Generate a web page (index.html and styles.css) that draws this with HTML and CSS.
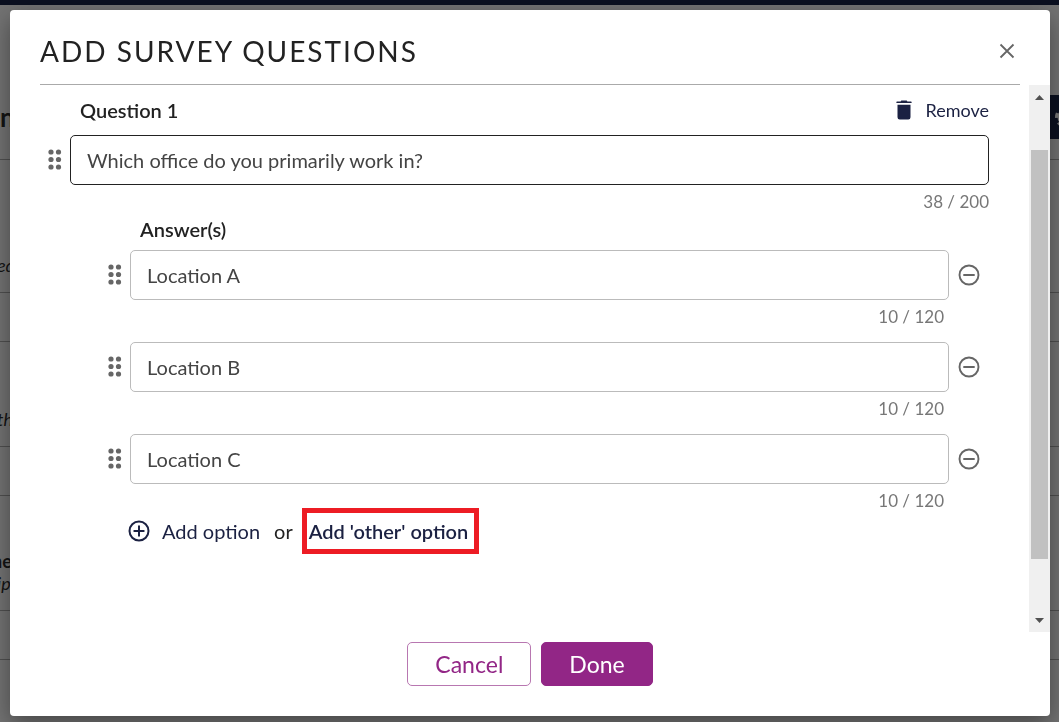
FILE: index.html
```
<!DOCTYPE html>
<html lang="en">

<head>
    <meta charset="UTF-8">
    <meta name="viewport" content="width=device-width, initial-scale=1.0">
    <title>Add Survey Questions</title>
    <link rel="stylesheet" href="styles.css">
</head>

<body>
    <!-- Shared icons -->
    <svg class="sprite" aria-hidden="true">
        <symbol id="drag" viewBox="0 0 14 22">
            <circle cx="3" cy="3" r="2.6" /><circle cx="10.5" cy="3" r="2.6" />
            <circle cx="3" cy="10.5" r="2.6" /><circle cx="10.5" cy="10.5" r="2.6" />
            <circle cx="3" cy="18" r="2.6" /><circle cx="10.5" cy="18" r="2.6" />
        </symbol>
        <symbol id="minus" viewBox="0 0 22 22">
            <circle cx="11" cy="11" r="9.5" fill="none" stroke="currentColor" stroke-width="1.9" />
            <path d="M6 11h10" stroke="currentColor" stroke-width="1.9" stroke-linecap="round" />
        </symbol>
    </svg>

    <!-- Page behind the dialog -->
    <main class="page">
        <div class="topbar"></div>
        <div class="page-row heading"><b>n</b><span class="settings">
            <svg width="22" height="22" viewBox="0 0 22 22"><circle cx="11" cy="11" r="6" fill="none" stroke="currentColor" stroke-width="5" /><circle cx="11" cy="11" r="9" fill="none" stroke="currentColor" stroke-width="4" stroke-dasharray="4.7 4.7" stroke-dashoffset="1" /></svg>
        </span></div>
        <div class="page-row tall"><i>ed</i></div>
        <div class="page-row short"></div>
        <div class="page-row medium"><i>th</i></div>
        <div class="page-row short"></div>
        <div class="page-row group"><b>ne</b><i>ip</i></div>
        <div class="page-row short"></div>
    </main>

    <div class="overlay">
        <section class="modal" role="dialog" aria-labelledby="modal-title">
            <header class="modal-header">
                <h1 id="modal-title">ADD SURVEY QUESTIONS</h1>
                <button class="close" aria-label="Close">
                    <svg width="16" height="16" viewBox="0 0 16 16"><path d="M1.5 1.5l13 13M14.5 1.5l-13 13" stroke="currentColor" stroke-width="1.8" /></svg>
                </button>
            </header>

            <div class="modal-body">
                <form class="question">
                    <div class="question-head">
                        <label for="question">Question 1</label>
                        <button type="button" class="remove">
                            <svg width="16" height="20" viewBox="0 0 16 20"><path d="M1 1.4h3.6L5.3.6h5.4l.7.8H15a.6.6 0 0 1 .6.6v1H.4V2a.6.6 0 0 1 .6-.6zM1.5 4.7h13v12.5a2.2 2.2 0 0 1-2.2 2.2H3.7a2.2 2.2 0 0 1-2.2-2.2z" fill="currentColor" /></svg>
                            Remove
                        </button>
                    </div>
                    <div class="field">
                        <button type="button" class="handle" aria-label="Move question"><svg><use href="#drag" /></svg></button>
                        <input class="active" id="question" type="text" maxlength="200" value="Which office do you primarily work in?">
                    </div>
                    <p class="count">38 / 200</p>

                    <fieldset class="answers">
                        <legend>Answer(s)</legend>
                        <div class="answer">
                            <div class="field">
                                <button type="button" class="handle" aria-label="Move answer"><svg><use href="#drag" /></svg></button>
                                <input type="text" maxlength="120" aria-label="Answer 1" value="Location A">
                                <button type="button" class="delete" aria-label="Delete answer"><svg><use href="#minus" /></svg></button>
                            </div>
                            <p class="count">10 / 120</p>
                        </div>
                        <div class="answer">
                            <div class="field">
                                <button type="button" class="handle" aria-label="Move answer"><svg><use href="#drag" /></svg></button>
                                <input type="text" maxlength="120" aria-label="Answer 2" value="Location B">
                                <button type="button" class="delete" aria-label="Delete answer"><svg><use href="#minus" /></svg></button>
                            </div>
                            <p class="count">10 / 120</p>
                        </div>
                        <div class="answer">
                            <div class="field">
                                <button type="button" class="handle" aria-label="Move answer"><svg><use href="#drag" /></svg></button>
                                <input type="text" maxlength="120" aria-label="Answer 3" value="Location C">
                                <button type="button" class="delete" aria-label="Delete answer"><svg><use href="#minus" /></svg></button>
                            </div>
                            <p class="count">10 / 120</p>
                        </div>
                    </fieldset>

                    <div class="add-row">
                        <button type="button" class="add">
                            <svg width="22" height="22" viewBox="0 0 22 22" fill="none" stroke="currentColor" stroke-width="2" stroke-linecap="round"><circle cx="11" cy="11" r="9.5" /><path d="M6.3 11h9.4M11 6.3v9.4" /></svg>
                            Add option
                        </button>
                        <span>or</span>
                        <button type="button" class="add-other">Add 'other' option</button>
                    </div>
                </form>

                <div class="scrollbar" aria-hidden="true">
                    <svg width="9" height="5" viewBox="0 0 9 5"><path d="M0 5L4.5 0 9 5z" /></svg>
                    <div class="track"><div class="thumb"></div></div>
                    <svg width="9" height="5" viewBox="0 0 9 5"><path d="M0 0L4.5 5 9 0z" /></svg>
                </div>
            </div>

            <footer class="modal-footer">
                <button class="btn">Cancel</button>
                <button class="btn primary">Done</button>
            </footer>
        </section>
    </div>
</body>

</html>
```
FILE: styles.css
```
/* General Styles */
* {
    box-sizing: border-box;
}

body {
    margin: 0;
    height: 100vh;
    overflow: hidden;
    font-family: Lato, sans-serif;
    font-size: 20px;
    color: #222222;
    background-color: #737373;
}

button {
    padding: 0;
    border: none;
    background: none;
    font: inherit;
    cursor: pointer;
}

svg {
    display: block;
    flex: none;
}

.sprite {
    position: absolute;
    width: 0;
    height: 0;
}

/* Page behind the dialog */
.page {
    color: #141414;
    font-size: 18px;
    line-height: 22px;
}

.topbar {
    height: 5px;
    background-color: #0b1020;
}

.page-row {
    display: flex;
    flex-direction: column;
    justify-content: flex-end;
    border-bottom: 1px solid #505050;
}

.page-row.heading {
    flex-direction: row;
    justify-content: space-between;
    align-items: flex-end;
    height: 155px;
    padding-bottom: 20px;
    font-size: 26px;
    line-height: 44px;
}

.settings {
    display: flex;
    align-items: center;
    width: 68px;
    height: 44px;
    padding-left: 36px;
    margin-right: -28px;
    color: #777777;
    background-color: #0b1020;
}

.page-row i {
    text-indent: -3px;
}

.page-row.tall {
    height: 133px;
    padding-bottom: 16px;
}

.page-row.short {
    height: 49px;
}

.page-row.medium {
    height: 105px;
    padding-bottom: 16px;
}

.page-row.group {
    height: 115px;
    padding-bottom: 16px;
}

.page-row.group b {
    text-indent: -8px;
}

/* Modal */
.overlay {
    position: fixed;
    inset: 0;
    display: flex;
    padding: 10px 9px 6px 10px;
}

.modal {
    flex: 1;
    display: flex;
    flex-direction: column;
    background-color: #ffffff;
    border-radius: 4px;
    box-shadow: 0 8px 24px rgba(0, 0, 0, 0.4);
}

.modal-header {
    display: flex;
    justify-content: space-between;
    align-items: center;
    height: 75px;
    margin: 0 30px;
    padding-top: 8px;
    border-bottom: 1px solid #aaaaaa;
}

.modal-header h1 {
    margin: 0;
    font-size: 28px;
    font-weight: 400;
    letter-spacing: 2px;
}

.close {
    padding: 5px;
    color: #666666;
}

.modal-body {
    flex: 1;
    display: flex;
    min-height: 0;
}

/* Question form */
.question {
    flex: 1;
    padding: 0 40px 0 30px;
    overflow: hidden;
}

.question-head {
    display: flex;
    justify-content: space-between;
    align-items: center;
    height: 50px;
    padding-left: 40px;
}

.question-head label,
.answers legend {
    font-weight: 600;
}

.remove {
    display: flex;
    align-items: center;
    gap: 14px;
    font-size: 18px;
    color: #1b2142;
}

.field {
    display: flex;
    align-items: center;
}

.field input {
    flex: 1;
    min-width: 0;
    height: 50px;
    padding: 0 16px;
    border: 1px solid #bbbbbb;
    border-radius: 5px;
    font: inherit;
    color: #444444;
    outline: none;
}

.field input.active {
    border-color: #222222;
}

.handle {
    width: 30px;
    padding-left: 8px;
    fill: #666666;
}

.handle svg {
    width: 14px;
    height: 22px;
}

.delete {
    width: 40px;
    color: #666666;
}

.delete svg {
    width: 22px;
    height: 22px;
    margin: 0 auto;
}

.count {
    margin: 8px 0 0;
    font-size: 17px;
    line-height: 18px;
    text-align: right;
    color: #777777;
}

.answers {
    margin: 7px 0 0 60px;
    padding: 0;
    border: none;
}

.answers legend {
    padding: 0 0 10px 40px;
    line-height: 22px;
}

.answer + .answer {
    margin-top: 16px;
}

.answer .count {
    margin-right: 45px;
}

.add-row {
    display: flex;
    align-items: center;
    gap: 14px;
    height: 36px;
    margin: 3px 0 0 88px;
}

.add {
    display: flex;
    align-items: center;
    gap: 12px;
    color: #1b2142;
}

/* Highlighted option */
.add-other {
    height: 36px;
    padding: 0 6px 0 2px;
    font-weight: 600;
    color: #1b2142;
    outline: 5px solid #ed1c24;
}

/* Scrollbar */
.scrollbar {
    display: flex;
    flex-direction: column;
    align-items: center;
    width: 21px;
    padding: 10px 0 9px;
    fill: #505050;
    background-color: #f0f0f0;
}

.track {
    flex: 1;
    width: 17px;
    margin: 6px 0;
    padding: 44px 0 53px;
}

.thumb {
    height: 100%;
    background-color: #c1c1c1;
}

/* Footer */
.modal-footer {
    display: flex;
    justify-content: center;
    gap: 10px;
    height: 84px;
    padding-top: 10px;
}

.btn {
    height: 44px;
    padding: 0 27px;
    border: 1px solid #b877b1;
    border-radius: 5px;
    font-size: 23px;
    color: #922686;
}

.btn.primary {
    border-color: #922686;
    background-color: #922686;
    color: #ffffff;
}
```
